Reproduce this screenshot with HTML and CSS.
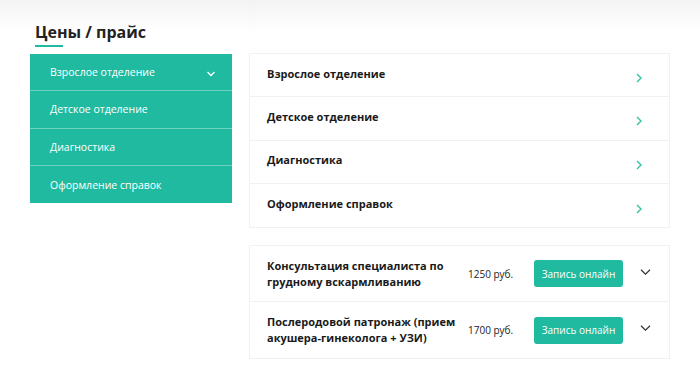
FILE: index.html
```html
<!DOCTYPE html>
<html lang="ru">
<head>
<meta charset="utf-8">
<link rel="stylesheet" href="styles.css">
</head>
<body>
<div class="page">
  <h1 class="title">Цены / прайс</h1>
  <div class="layout">
    <nav class="menu">
      <div class="menu-item active">Взрослое отделение
        <svg class="menu-chev" width="10" height="6" viewBox="0 0 10 6"><path d="M1.5 1l3.5 3.5L8.5 1" fill="none" stroke="#fff" stroke-width="1.3"/></svg>
      </div>
      <div class="menu-item">Детское отделение</div>
      <div class="menu-item">Диагностика</div>
      <div class="menu-item">Оформление справок</div>
    </nav>
    <div class="content">
      <div class="card">
        <div class="cat-row"><span>Взрослое отделение</span><svg class="right-chev" width="6" height="10" viewBox="0 0 6 10"><path d="M1 1l4 4-4 4" fill="none" stroke="#2ec4a6" stroke-width="1.4"/></svg></div>
        <div class="cat-row"><span>Детское отделение</span><svg class="right-chev" width="6" height="10" viewBox="0 0 6 10"><path d="M1 1l4 4-4 4" fill="none" stroke="#2ec4a6" stroke-width="1.4"/></svg></div>
        <div class="cat-row"><span>Диагностика</span><svg class="right-chev" width="6" height="10" viewBox="0 0 6 10"><path d="M1 1l4 4-4 4" fill="none" stroke="#2ec4a6" stroke-width="1.4"/></svg></div>
        <div class="cat-row"><span>Оформление справок</span><svg class="right-chev" width="6" height="10" viewBox="0 0 6 10"><path d="M1 1l4 4-4 4" fill="none" stroke="#2ec4a6" stroke-width="1.4"/></svg></div>
      </div>
      <div class="card prices">
        <div class="price-row">
          <div class="svc">Консультация специалиста по грудному вскармливанию</div>
          <div class="price">1250 руб.</div>
          <button class="btn">Запись онлайн</button>
          <svg class="down-chev" width="11" height="6" viewBox="0 0 11 6"><path d="M1 0.8l4.5 4.4L10 0.8" fill="none" stroke="#333" stroke-width="1.2"/></svg>
        </div>
        <div class="price-row">
          <div class="svc">Послеродовой патронаж (прием акушера-гинеколога + УЗИ)</div>
          <div class="price">1700 руб.</div>
          <button class="btn">Запись онлайн</button>
          <svg class="down-chev" width="11" height="6" viewBox="0 0 11 6"><path d="M1 0.8l4.5 4.4L10 0.8" fill="none" stroke="#333" stroke-width="1.2"/></svg>
        </div>
      </div>
    </div>
  </div>
</div>
</body>
</html>
```

FILE: styles.css
```css
* { box-sizing: border-box; }
html, body { margin: 0; padding: 0; }
body {
  font-family: "Open Sans", "Liberation Sans", sans-serif;
  color: #222;
  background: linear-gradient(to bottom, #f3f3f3 0px, #ffffff 32px) no-repeat #fff;
  min-height: 386px;
}
.page { padding: 21px 30px 0 30px; }
.title {
  margin: 0 0 8px 5px;
  font-size: 16px;
  font-weight: 700;
  line-height: 22px;
  color: #222;
  display: inline-block;
  position: relative;
  padding-bottom: 2px;
}
.title::after {
  content: "";
  position: absolute;
  left: 0; bottom: -2px;
  width: 28px; height: 2px;
  background: #1fba9f;
}
.layout { display: flex; align-items: flex-start; gap: 17px; }
.menu { width: 202px; background: #1fba9f; margin-top: 1px; }
.menu-item {
  height: 37.3px;
  display: flex;
  align-items: center;
  justify-content: space-between;
  padding: 0 16px 0 20px;
  color: #fff;
  font-size: 10.5px;
  border-bottom: 1px solid rgba(255,255,255,0.35);
}
.menu-item:last-child { border-bottom: none; }
.menu-chev { margin-top: 3px; }
.content { width: 421px; display: flex; flex-direction: column; gap: 17px; }
.card { border: 1px solid #f1f1f1; background: #fff; }
.cat-row {
  height: 43.3px;
  display: flex;
  align-items: center;
  justify-content: space-between;
  padding: 0 27px 0 17px;
  font-size: 11px;
  font-weight: 700;
  color: #1a1a1a;
  border-bottom: 1px solid #f1f1f1;
}
.cat-row:last-child { border-bottom: none; }
.cat-row span { margin-top: -4px; }
.right-chev { margin-top: 6px; }
.price-row {
  height: 56px;
  display: flex;
  align-items: center;
  padding: 0 0 0 17px;
  border-bottom: 1px solid #f1f1f1;
}
.price-row:last-child { border-bottom: none; }
.svc {
  width: 196px;
  font-size: 11px;
  font-weight: 700;
  line-height: 16px;
  color: #1a1a1a;
}
.price {
  margin-left: 5px;
  width: 66px;
  font-size: 10px;
  color: #222;
}
.btn {
  border: none;
  background: #1fba9f;
  color: #fff;
  font-family: inherit;
  font-size: 10px;
  width: 89px;
  height: 27px;
  border-radius: 3px;
  padding: 0;
}
.down-chev { margin-left: 17px; margin-top: -4px; }
```
